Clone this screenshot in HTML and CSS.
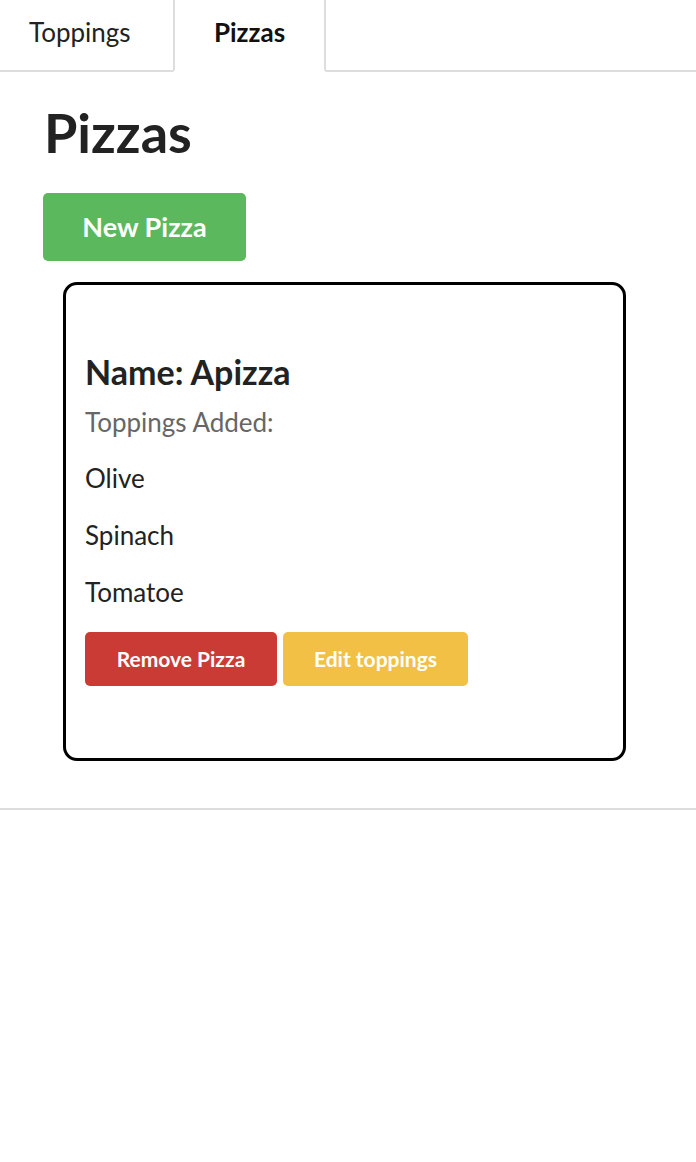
FILE: index.html
```html
<!DOCTYPE html>
<html>
<head>
<meta charset="utf-8">
<link rel="stylesheet" href="styles.css">
</head>
<body>
<nav class="tabs">
  <div class="tab tab-first">Toppings</div>
  <div class="tab active">Pizzas</div>
</nav>
<main class="panel">
  <h1 class="title">Pizzas</h1>
  <button class="btn btn-new">New Pizza</button>
  <section class="card">
    <h3 class="card-name">Name: Apizza</h3>
    <div class="card-sub">Toppings Added:</div>
    <p class="topping">Olive</p>
    <p class="topping">Spinach</p>
    <p class="topping">Tomatoe</p>
    <div class="actions">
      <button class="btn btn-sm btn-remove">Remove Pizza</button>
      <button class="btn btn-sm btn-edit">Edit toppings</button>
    </div>
  </section>
</main>
</body>
</html>
```
FILE: styles.css
```css
* { box-sizing: border-box; }
html, body { margin: 0; padding: 0; background: #fff; }
body {
  font-family: Lato, "Open Sans", sans-serif;
  color: #222;
}
.tabs {
  display: flex;
  height: 72px;
  border-bottom: 2px solid #ddd;
}
.tab {
  height: 72px;
  margin-bottom: -2px;
  display: flex;
  align-items: center;
  justify-content: center;
  font-size: 26px;
  line-height: 1.2;
  padding-bottom: 5px;
  color: #222;
  border-bottom: 2px solid #ddd;
}
.tab-first {
  width: 173px;
  justify-content: flex-start;
  padding-left: 29px;
}
.tab.active {
  width: 153px;
  font-weight: 700;
  color: #111;
  border-left: 2px solid #ddd;
  border-right: 2px solid #ddd;
  border-bottom: 2px solid #fff;
}
.panel {
  height: 738px;
  border-bottom: 2px solid #ddd;
  padding: 29px 0 0 44px;
}
.title {
  margin: 0;
  font-size: 54px;
  line-height: 1.2;
  font-weight: 700;
}
.btn {
  font-family: Lato, "Open Sans", sans-serif;
  font-weight: 700;
  color: #fff;
  border: none;
  cursor: pointer;
  display: block;
  line-height: 1.2;
}
.btn-new {
  margin: 27px 0 0 -1px;
  width: 203px;
  height: 68px;
  background: #5cb85c;
  border-radius: 5px;
  font-size: 27px;
  padding: 0;
}
.card {
  margin: 21px 0 0 19px;
  width: 563px;
  height: 479px;
  border: 3px solid #000;
  border-radius: 14px;
  padding: 67px 0 0 19px;
}
.card-name {
  margin: 0;
  font-size: 34px;
  line-height: 1.2;
  font-weight: 700;
}
.card-sub {
  margin-top: 14px;
  font-size: 26px;
  line-height: 1.2;
  color: #666;
}
.topping {
  margin: 25px 0 0;
  font-size: 26px;
  line-height: 1.2;
}
.topping + .topping { margin-top: 26px; }
.actions {
  display: flex;
  gap: 6px;
  margin: 24px 0 0 0;
}
.btn-sm {
  height: 54px;
  border-radius: 5px;
  font-size: 21px;
  padding: 0 0 2px;
}
.btn-remove { width: 192px; background: #cb3b35; }
.btn-edit { width: 185px; background: #f2c045; }
```
